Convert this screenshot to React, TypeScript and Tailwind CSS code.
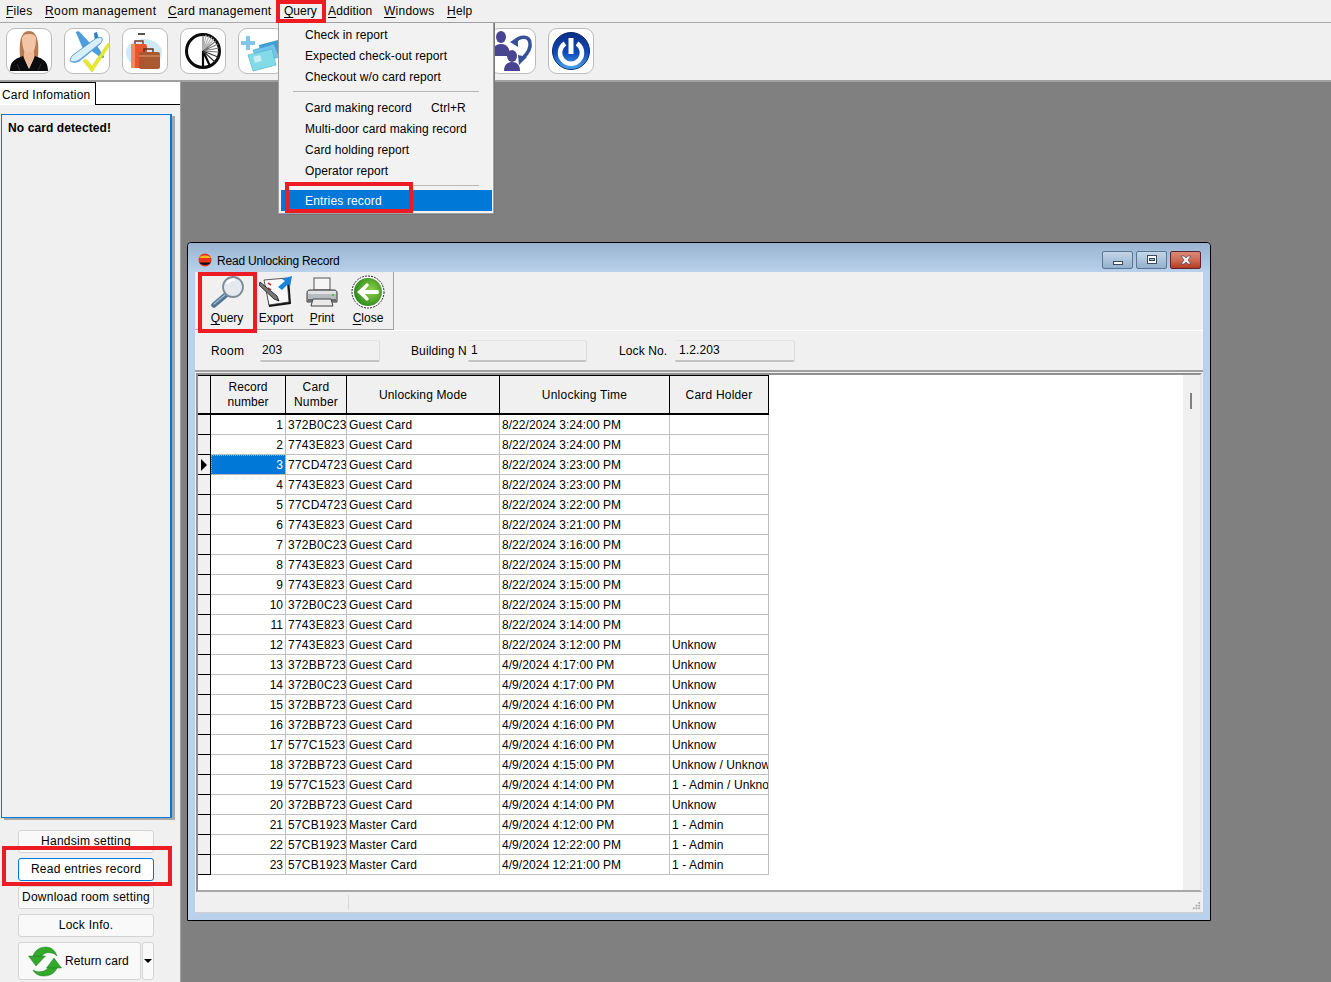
import React from "react";

const rows: [string, string, string, string, string][] = [
  ["1", "372B0C23", "Guest Card", "8/22/2024 3:24:00 PM", ""],
  ["2", "7743E823", "Guest Card", "8/22/2024 3:24:00 PM", ""],
  ["3", "77CD4723", "Guest Card", "8/22/2024 3:23:00 PM", ""],
  ["4", "7743E823", "Guest Card", "8/22/2024 3:23:00 PM", ""],
  ["5", "77CD4723", "Guest Card", "8/22/2024 3:22:00 PM", ""],
  ["6", "7743E823", "Guest Card", "8/22/2024 3:21:00 PM", ""],
  ["7", "372B0C23", "Guest Card", "8/22/2024 3:16:00 PM", ""],
  ["8", "7743E823", "Guest Card", "8/22/2024 3:15:00 PM", ""],
  ["9", "7743E823", "Guest Card", "8/22/2024 3:15:00 PM", ""],
  ["10", "372B0C23", "Guest Card", "8/22/2024 3:15:00 PM", ""],
  ["11", "7743E823", "Guest Card", "8/22/2024 3:14:00 PM", ""],
  ["12", "7743E823", "Guest Card", "8/22/2024 3:12:00 PM", "Unknow"],
  ["13", "372BB723", "Guest Card", "4/9/2024 4:17:00 PM", "Unknow"],
  ["14", "372B0C23", "Guest Card", "4/9/2024 4:17:00 PM", "Unknow"],
  ["15", "372BB723", "Guest Card", "4/9/2024 4:16:00 PM", "Unknow"],
  ["16", "372BB723", "Guest Card", "4/9/2024 4:16:00 PM", "Unknow"],
  ["17", "577C1523", "Guest Card", "4/9/2024 4:16:00 PM", "Unknow"],
  ["18", "372BB723", "Guest Card", "4/9/2024 4:15:00 PM", "Unknow / Unknow"],
  ["19", "577C1523", "Guest Card", "4/9/2024 4:14:00 PM", "1 - Admin / Unknow"],
  ["20", "372BB723", "Guest Card", "4/9/2024 4:14:00 PM", "Unknow"],
  ["21", "57CB1923", "Master Card", "4/9/2024 4:12:00 PM", "1 - Admin"],
  ["22", "57CB1923", "Master Card", "4/9/2024 12:22:00 PM", "1 - Admin"],
  ["23", "57CB1923", "Master Card", "4/9/2024 12:21:00 PM", "1 - Admin"],
];

const U = ({ c, r }: { c: string; r: string }) => (
  <span>
    <span className="underline underline-offset-2">{c}</span>
    {r}
  </span>
);

const Woman = () => (
  <svg viewBox="0 0 40 42" className="w-[40px] h-[42px]">
    <path d="M11 27C10 14 11 1 20 1s10 13 9 26l-3 2H14z" fill="#b57a50" />
    <path d="M13 9c0-4 3-5 7-5s7 1 7 5c0 9-3 16-7 18-4-2-7-9-7-18z" fill="#f3c4a6" />
    <path d="M15 22h10v6l-5 10-5-10z" fill="#f0bb9b" />
    <path d="M1 41c0-9 4-12 13-15l6 13 6-13c9 3 13 6 13 15z" fill="#0c0c0e" />
    <path d="M8 34l3 7M32 34l-3 7" stroke="#3a3a3e" strokeWidth=".8" />
  </svg>
);
const Plane = () => (
  <svg viewBox="0 0 40 42" className="w-[40px] h-[42px] overflow-visible">
    <path d="M9 2l3-.5 12 13-7 6z" fill="#4d9ede" stroke="#2b78b8" strokeWidth=".4" />
    <path d="M27 3l3-1 3 12-5-2z" fill="#2f7fc4" />
    <path d="M25 21l5-5 7 11-2 1z" fill="#4d9ede" stroke="#2b78b8" strokeWidth=".4" />
    <path d="M3 31c0-2 1-4 3-6L28 9c3-2 6-2 7-1s0 4-2 6L13 30c-3 2-7 3-10 1z" fill="#d8eefa" stroke="#3d8dcc" strokeWidth=".8" />
    <path d="M4 31c3 1 6 0 9-2l20-16-1 2-19 16c-3 2-7 2-9 0z" fill="#5aa7de" />
    <path d="M16 31l3-2 6 7 16-23 2 2-18 27z" fill="#e6ea2a" stroke="#cbd01f" strokeWidth=".5" />
  </svg>
);
const Luggage = () => (
  <svg viewBox="0 0 40 42" className="w-[40px] h-[42px]">
    <ellipse cx="19" cy="23" rx="18" ry="14" fill="#cfe9f5" />
    <rect x="13" y="3" width="7" height="2" fill="#555" />
    <path d="M10 14v-3h8v3" fill="none" stroke="#7a3a20" strokeWidth="1.4" />
    <rect x="6" y="14" width="16" height="24" rx="2" fill="#e9552c" />
    <rect x="6" y="14" width="4" height="24" fill="#f48a5e" />
    <path d="M19 22v-3h9v3" fill="none" stroke="#5a2d18" strokeWidth="1.4" />
    <rect x="14" y="22" width="21" height="17" rx="2" fill="#a9592f" />
    <rect x="14" y="25" width="21" height="2" fill="#c47c4a" />
  </svg>
);
const Wheel = () => (
  <svg viewBox="0 0 40 42" className="w-[40px] h-[42px]">
    <circle cx="20" cy="21" r="16.500" fill="#fff" stroke="#0a0a0a" strokeWidth="3" />
    <path d="M20 21V37M20 21L27 36" stroke="#0a0a0a" strokeWidth="2.200" fill="none" />
    <path d="M20 21V5" stroke="#555" strokeWidth="1" fill="none" />
    <path d="M20 21L23 5M20 21L26 6M20 21L29 7M20 21L31 9" stroke="#b4b4b4" strokeWidth="1.200" fill="none" />
    <path d="M20 21L33 11M20 21L35 14M20 21L36 18M20 21L36 22" stroke="#777" strokeWidth="1.200" fill="none" />
    <path d="M20 21L35 27M20 21L32 32" stroke="#333" strokeWidth="1.200" fill="none" />
  </svg>
);
const Cards = () => (
  <svg viewBox="0 0 40 42" className="w-[40px] h-[42px]">
    <path d="M18 15l19-5 2 13-19 6z" fill="#3f9fd6" />
    <path d="M12 20l21-6 5 13-21 7z" fill="#72c3e8" stroke="#3a98c8" strokeWidth=".5" />
    <path d="M7 25l24-6 4 16-23 6z" fill="#84dbe8" stroke="#45aecb" strokeWidth=".6" />
    <rect x="13" y="26" width="7" height="6" fill="#c9eef2" transform="rotate(-14 16 29)" />
    <path d="M5 6h4v5h5v4H9v5H5v-5H0v-4h5z" fill="#83c6ea" />
  </svg>
);
const People = () => (
  <svg viewBox="0 0 44 42" className="w-[44px] h-[42px]">
    <g fill="#4a4590">
      <ellipse cx="10" cy="7" rx="5" ry="6" />
      <path d="M1 26c0-8 3-12 9-12s9 4 9 12z" />
      <ellipse cx="21" cy="26" rx="5" ry="6" />
      <path d="M13 41c0-6 3-9 8-9s8 3 8 9z" />
    </g>
    <path d="M23 12c6-6 15-7 16 1 1 6-3 11-7 15" fill="none" stroke="#36509a" strokeWidth="3.500" />
    <path d="M19 12l8-5v10zM27 25l9 2-8 8z" fill="#36509a" />
  </svg>
);
const Power = () => (
  <svg viewBox="0 0 40 42" className="w-[40px] h-[42px]">
    <defs>
      <linearGradient id="pw" x1="0" y1="0" x2="0" y2="1">
        <stop offset="0%" stopColor="#0b2f86" />
        <stop offset="55%" stopColor="#0f49b8" />
        <stop offset="100%" stopColor="#4aa8f0" />
      </linearGradient>
    </defs>
    <circle cx="20" cy="21" r="18.500" fill="url(#pw)" stroke="#0a2a74" strokeWidth="1" />
    <path d="M14 13.500a11 11 0 1 0 12 0" fill="none" stroke="#fff" strokeWidth="4.500" />
    <rect x="17.500" y="8" width="5" height="16" fill="#fff" />
  </svg>
);

const Magnifier = () => (
  <svg viewBox="0 0 34 34" className="w-[34px] h-[34px]">
    <path d="M4 30L17 19" stroke="#4f7590" strokeWidth="5.500" strokeLinecap="round" />
    <path d="M4 29L16 19" stroke="#9bbbd0" strokeWidth="1.500" strokeLinecap="round" />
    <circle cx="23" cy="12" r="10" fill="#e4e9ef" stroke="#7d8b97" strokeWidth="1.800" />
    <path d="M17 9a7 7 0 0 1 8-4" stroke="#fff" strokeWidth="2.500" fill="none" />
  </svg>
);
const ExportI = () => (
  <svg viewBox="0 0 34 34" className="w-[34px] h-[34px]">
    <path d="M6 6l24-3 2 26-22 3z" fill="#111" />
    <path d="M5 5l23-2 2 24-20 3z" fill="#f8f8f8" stroke="#333" strokeWidth=".8" />
    <path d="M9 8l3 2M9 13l3 2" stroke="#c33" strokeWidth="1.600" />
    <path d="M1 7l17 14 2 5-5-2L0 10z" fill="#777" stroke="#111" strokeWidth=".8" />
    <path d="M19 12l7-6-3-2 10-3-2 11-2-3-6 6z" fill="#1a83dd" />
  </svg>
);
const Printer = () => (
  <svg viewBox="0 0 34 34" className="w-[34px] h-[34px]">
    <rect x="9" y="3" width="16" height="12" fill="#f6f6f6" stroke="#555" />
    <path d="M2 18c0-2 1-3 3-3h24c2 0 3 1 3 3v9H2z" fill="#b9bcbf" stroke="#3c3c3c" />
    <rect x="3" y="16" width="28" height="3" fill="#dfe1e3" />
    <rect x="3" y="24" width="28" height="3" fill="#6a6d70" />
    <path d="M8 24h18l2 7H6z" fill="#e9e9e9" stroke="#444" />
    <rect x="27" y="19" width="2" height="2" fill="#42c048" />
  </svg>
);
const CloseI = () => (
  <svg viewBox="0 0 34 34" className="w-[34px] h-[34px]">
    <defs>
      <radialGradient id="cl" cx="60%" cy="45%" r="60%">
        <stop offset="0%" stopColor="#96d24a" />
        <stop offset="100%" stopColor="#2c8a1e" />
      </radialGradient>
    </defs>
    <circle cx="17" cy="17" r="16" fill="#fff" stroke="#222" strokeWidth="1" strokeDasharray="2 1" />
    <circle cx="17" cy="17" r="14" fill="url(#cl)" />
    <path d="M6 17l10-9 2 2-4 5h13c1 0 1 4 0 4H14l4 5-2 2z" fill="#fff" />
  </svg>
);
const ReturnI = () => (
  <svg viewBox="0 0 34 34" className="w-[34px] h-[34px]">
    <g fill="#33a92c" stroke="#1f7f20" strokeWidth=".5">
      <path d="M0.500 12h17L8 22z" />
      <path d="M5 12C7 6 12 3 18 3c5 0 9 3 11 9-3-3-7-4-11-3-2 .5-3 2-4 3z" />
      <path d="M18.500 24h15l-7.500-10z" />
      <path d="M29 24c-2 5-7 8-13 8-5 0-9-2-11-6 5 3 12 2 15-2z" />
    </g>
  </svg>
);

const ToolIcon = ({ children, cls }: { children?: React.ReactNode; cls?: string }) => (
  <div className={"w-[46px] h-[46px] shrink-0 rounded-[9px] border border-[#bcbcbc] bg-white flex items-center justify-center " + (cls ?? "")}>
    {children}
  </div>
);

const SideBtn = ({ label, active }: { label: string; active?: boolean }) => (
  <div
    className={
      "w-[136px] h-[23px] rounded-[3px] bg-[#f9f9f9] border flex items-center justify-center pb-[2px] text-[12px] tracking-[0.25px] " +
      (active ? "border-[#0078d7] bg-white" : "border-[#d4d4d4]")
    }
  >
    {label}
  </div>
);

const Tool = ({ w, icon, c, r }: { w: string; icon: React.ReactNode; c: string; r: string }) => (
  <div className={w + " flex flex-col items-center pt-[3px]"}>
    {icon}
    <span className="text-[12px] leading-[14px] mt-[2px]">
      <U c={c} r={r} />
    </span>
  </div>
);

const Field = ({ value, w, pl }: { value: string; w: string; pl: string }) => (
  <div className={w + " " + pl + " h-[22px] rounded-[2px] border-b-2 border-[#c4c4c4] border-r border-r-[#dcdcdc] border-t border-t-[#e4e4e4] text-[12px] leading-[19px] tracking-[0.1px]"}>
    {value}
  </div>
);

const Redbox = ({ cls }: { cls: string }) => (
  <div className={"absolute border-[4px] border-[#ed1c24] pointer-events-none " + cls} />
);

const MenuItem = ({ label, sc }: { label: string; sc?: string }) => (
  <div className="h-[21px] pl-[26px] flex items-center text-[12px] tracking-[0.08px] relative">
    <span>{label}</span>
    {sc && <span className="absolute left-[152px]">{sc}</span>}
  </div>
);

const Sep = () => <div className="h-[1px] bg-[#b8b8b8] mx-[14px] my-[3px]" />;

export default function App() {
  return (
    <div
      className="relative w-[1331px] h-[982px] overflow-hidden bg-[#808080] text-black flex flex-col"
      style={{ fontFamily: '"Liberation Sans", Arial, sans-serif' }}
    >
      {/* menu bar */}
      <div className="h-[23px] bg-[#f0f0f0] border-b border-[#a8a8a8] flex items-center pl-[6px] text-[12px] shrink-0">
        <div className="w-[39px] tracking-[0.2px]"><U c="F" r="iles" /></div>
        <div className="w-[123px] tracking-[0.4px]"><U c="R" r="oom management" /></div>
        <div className="w-[116px] tracking-[0.27px]"><U c="C" r="ard management" /></div>
        <div className="w-[44px]"><U c="Q" r="uery" /></div>
        <div className="w-[56px] tracking-[0.12px]"><U c="A" r="ddition" /></div>
        <div className="w-[63px] tracking-[0.25px]"><U c="W" r="indows" /></div>
        <div className="tracking-[0.2px]"><U c="H" r="elp" /></div>
      </div>

      {/* toolbar */}
      <div className="h-[59px] bg-[#f0f0f0] border-b-2 border-[#a0a0a0] flex items-center gap-[12px] pl-[6px] shrink-0 pb-[2px]">
        <ToolIcon><Woman /></ToolIcon>
        <ToolIcon><Plane /></ToolIcon>
        <ToolIcon><Luggage /></ToolIcon>
        <ToolIcon><Wheel /></ToolIcon>
        <ToolIcon><Cards /></ToolIcon>
        <ToolIcon />
        <ToolIcon />
        <ToolIcon />
        <ToolIcon cls="ml-[20px]"><People /></ToolIcon>
        <ToolIcon><Power /></ToolIcon>
      </div>

      <div className="flex-1 flex min-h-0">
        {/* sidebar */}
        <div className="w-[181px] shrink-0 bg-[#f0f0f0] border-r border-[#a0a0a0] flex flex-col">
          <div className="h-[23px] bg-white border-b border-black flex shrink-0 mb-[9px]">
            <div className="w-[96px] h-[23px] bg-white border-r border-t border-black pl-[2px] text-[12px] leading-[24px] tracking-[0.2px]">
              Card Infomation
            </div>
          </div>
          <div className="ml-[1px] w-[171px] h-[704px] border border-[#0078d7] border-r-2 bg-[#f0f0f0] pl-[6px] pt-[5px] leading-[16px] text-[12px] font-bold tracking-[0.1px] shadow-[3px_2px_0_#a8a8a8] shrink-0">
            No card detected!
          </div>
          <div className="flex flex-col gap-[5px] pl-[18px] pt-[12px]">
            <SideBtn label="Handsim setting" />
            <SideBtn label="Read entries record" active />
            <SideBtn label="Download room setting" />
            <SideBtn label="Lock Info." />
            <div className="flex gap-[1px]">
              <div className="w-[123px] h-[38px] rounded-[3px] bg-[#f9f9f9] border border-[#d4d4d4] flex items-center pl-[9px] gap-[2px] text-[12px] tracking-[0.1px]">
                <ReturnI />
                <span className="ml-[1px]">Return card</span>
              </div>
              <div className="w-[12px] h-[38px] rounded-[3px] bg-[#f9f9f9] border border-[#d4d4d4] flex items-center justify-center">
                <div className="w-0 h-0 border-l-[4px] border-r-[4px] border-t-[4px] border-l-transparent border-r-transparent border-t-black" />
              </div>
            </div>
          </div>
        </div>
      </div>

      {/* query dropdown */}
      <div className="absolute left-[278px] top-[22px] w-[216px] h-[192px] bg-[#f2f2f2] border border-[#a0a0a0] shadow-[1px_1px_0_#777] pt-[1px]">
        <MenuItem label="Check in report" />
        <MenuItem label="Expected check-out report" />
        <MenuItem label="Checkout w/o card report" />
        <div className="h-[1px]" />
        <Sep />
        <div className="h-[2px]" />
        <MenuItem label="Card making record" sc="Ctrl+R" />
        <MenuItem label="Multi-door card making record" />
        <MenuItem label="Card holding report" />
        <MenuItem label="Operator report" />
        <div className="h-[1px]" />
        <Sep />
        <div className="ml-[2px] mr-[1px] mt-[4px] h-[21px] bg-[#0078d7] text-white pl-[24px] pt-[1px] flex items-center text-[12px] tracking-[0.15px]">
          Entries record
        </div>
      </div>

      {/* window */}
      <div className="absolute left-[187px] top-[242px] w-[1024px] h-[679px] border border-black rounded-t-[4px] bg-[#b9d1ea] flex flex-col">
        <div className="h-[29px] shrink-0 bg-gradient-to-b from-[#99b4d1] to-[#b9d1ea] flex items-center pl-[10px] pr-[9px] pt-[4px] text-[12px] rounded-t-[4px]">
          <svg viewBox="0 0 14 14" className="w-[14px] h-[14px] mr-[5px]">
            <circle cx="7" cy="7" r="6.500" fill="#e8341c" />
            <path d="M1 5a6.500 4 0 0 1 12 0z" fill="#f7b80f" />
            <path d="M1 9.500a6.500 4 0 0 0 12 0z" fill="#111" />
          </svg>
          <span className="mt-[2px] tracking-[-0.2px]">Read Unlocking Record</span>
          <div className="ml-auto flex gap-[3px]">
            <div className="w-[31px] h-[18px] rounded-[2px] border border-[#5b7692] bg-gradient-to-b from-[#c4d6e9] to-[#94b0cc] flex items-end justify-center pb-[3px]">
              <div className="w-[10px] h-[4px] bg-white border border-[#3a4a5e]" />
            </div>
            <div className="w-[31px] h-[18px] rounded-[2px] border border-[#5b7692] bg-gradient-to-b from-[#c4d6e9] to-[#94b0cc] flex items-center justify-center">
              <div className="w-[10px] h-[9px] bg-white border border-[#3a4a5e] flex items-center justify-center">
                <div className="w-[6px] h-[3px] bg-[#9fb6cd] border border-[#3a4a5e]" />
              </div>
            </div>
            <div className="w-[31px] h-[18px] rounded-[2px] border border-[#5e2130] bg-gradient-to-b from-[#d98a78] via-[#cf6a52] to-[#b83a20] flex items-center justify-center">
              <svg viewBox="0 0 12 10" className="w-[12px] h-[10px]">
                <path d="M1 1h3l2 2 2-2h3L8 5l3 4H8L6 7 4 9H1l3-4z" fill="#f3f3f3" stroke="#4a4a5a" strokeWidth=".7" />
              </svg>
            </div>
          </div>
        </div>

        <div className="flex-1 mx-[7px] mb-[7px] bg-[#f0f0f0] flex flex-col min-h-0">
          {/* window toolbar */}
          <div className="h-[59px] shrink-0 border-b border-white">
            <div className="w-[199px] h-[58px] border-r border-b border-[#a0a0a0] flex pl-[5px]">
              <Tool w="w-[54px]" icon={<Magnifier />} c="Q" r="uery" />
              <Tool w="w-[44px]" icon={<ExportI />} c="" r="Export" />
              <Tool w="w-[48px]" icon={<Printer />} c="P" r="rint" />
              <Tool w="w-[44px]" icon={<CloseI />} c="C" r="lose" />
            </div>
          </div>
          {/* fields */}
          <div className="h-[41px] shrink-0 border-b-2 border-[#a0a0a0] flex items-center pl-[16px] text-[12px]">
            <span className="w-[49px] tracking-[0.3px]">Room</span>
            <Field value="203" w="w-[120px]" pl="pl-[2px]" />
            <span className="ml-[31px] w-[57px] tracking-[0.1px]">Building N</span>
            <Field value="1" w="w-[119px]" pl="pl-[3px]" />
            <span className="ml-[32px] w-[56px] tracking-[0.1px]">Lock No.</span>
            <Field value="1.2.203" w="w-[120px]" pl="pl-[4px]" />
          </div>
          {/* grid */}
          <div className="h-[519px] shrink-0 mt-[1px] ml-[1px] mr-[1px] border-l-2 border-t-2 border-[#909090] border-r-2 border-r-[#e4e4e4] border-b-2 border-b-[#a8a8a8] bg-white flex overflow-hidden">
            <div className="flex-1 min-w-0 overflow-hidden">
              <table className="table-fixed border-separate border-spacing-0 w-[571px] text-[12px]">
                <colgroup>
                  <col className="w-[13px]" />
                  <col className="w-[75px]" />
                  <col className="w-[61px]" />
                  <col className="w-[153px]" />
                  <col className="w-[170px]" />
                  <col className="w-[99px]" />
                </colgroup>
                <thead>
                  <tr className="h-[40px] bg-[#f0f0f0] leading-[15px]">
                    <th className="border-r border-b-2 border-t border-black font-normal" />
                    <th className="border-r border-b-2 border-t border-black font-normal tracking-[0.05px]">Record<br />number</th>
                    <th className="border-r border-b-2 border-t border-black font-normal tracking-[0.25px]">Card<br />Number</th>
                    <th className="border-r border-b-2 border-t border-black font-normal tracking-[0.15px] pt-[1px]">Unlocking Mode</th>
                    <th className="border-r border-b-2 border-t border-black font-normal tracking-[0.25px] pt-[1px]">Unlocking Time</th>
                    <th className="border-r border-b-2 border-t border-black font-normal tracking-[0.2px] pt-[1px]">Card Holder</th>
                  </tr>
                </thead>
                <tbody>
                  {rows.map((r, i) => (
                    <tr key={r[0]} className="h-[20px]">
                      <td className="border-r border-b border-black bg-[#f0f0f0] p-0">
                        {i === 2 && (
                          <div className="ml-[3px] w-0 h-0 border-t-[6px] border-b-[6px] border-l-[6px] border-t-transparent border-b-transparent border-l-black" />
                        )}
                      </td>
                      <td className={"border-r border-b border-[#c0c0c0] text-right pr-[2px] " + (i === 2 ? "bg-[#0078d7] text-white outline-1 outline-dotted -outline-offset-1 outline-[#e0a040]" : "")}>{r[0]}</td>
                      <td className="border-r border-b border-[#c0c0c0] pl-[2px] whitespace-nowrap overflow-hidden tracking-[0.25px]">{r[1]}</td>
                      <td className="border-r border-b border-[#c0c0c0] pl-[2px] whitespace-nowrap overflow-hidden tracking-[0.2px]">{r[2]}</td>
                      <td className="border-r border-b border-[#c0c0c0] pl-[2px] whitespace-nowrap overflow-hidden tracking-[0.05px]">{r[3]}</td>
                      <td className="border-r border-b border-[#c0c0c0] pl-[2px] whitespace-nowrap overflow-hidden tracking-[0.1px]">{r[4]}</td>
                    </tr>
                  ))}
                </tbody>
              </table>
            </div>
            <div className="w-[17px] shrink-0 bg-[#f0f0f0] pt-[18px] pl-[7px]">
              <div className="w-[2px] h-[16px] bg-[#808080]" />
            </div>
          </div>
          {/* status */}
          <div className="flex-1 flex items-stretch relative mt-[1px] border-b border-[#d0d0d0]">
            <div className="w-[154px] border-r border-[#d8d8d8] my-[2px]" />
            <svg viewBox="0 0 10 10" className="absolute right-[2px] bottom-[1px] w-[9px] h-[9px]" fill="#a8a8a8">
              <rect x="7" y="0" width="2" height="2" />
              <rect x="4" y="3" width="2" height="2" />
              <rect x="7" y="3" width="2" height="2" />
              <rect x="1" y="6" width="2" height="2" />
              <rect x="4" y="6" width="2" height="2" />
              <rect x="7" y="6" width="2" height="2" />
            </svg>
          </div>
        </div>
      </div>

      <Redbox cls="left-[276px] top-0 w-[50px] h-[23px]" />
      <Redbox cls="left-[285px] top-[182px] w-[128px] h-[31px]" />
      <Redbox cls="left-[198px] top-[272px] w-[59px] h-[61px]" />
      <Redbox cls="left-[2px] top-[846px] w-[170px] h-[40px]" />
    </div>
  );
}
